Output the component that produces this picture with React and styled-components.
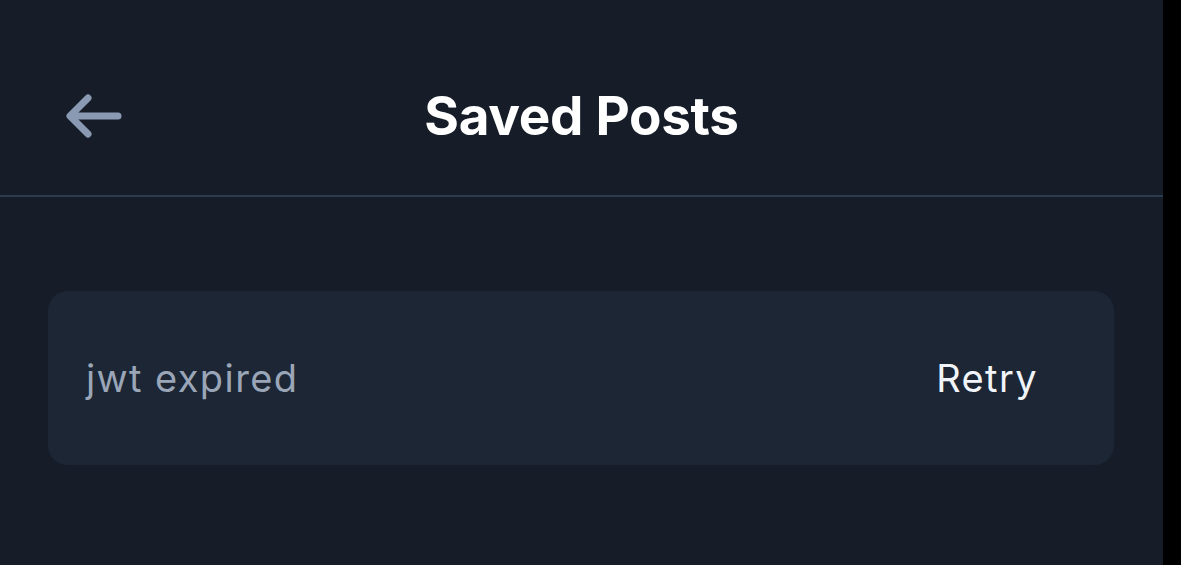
import React from 'react'
import styled, {createGlobalStyle} from 'styled-components'

const GlobalStyle = createGlobalStyle`
  html, body {
    margin: 0;
    padding: 0;
    background: #000;
    font-family: Inter, "Noto Sans", sans-serif;
  }
`;

const Page = styled.div`
  display: flex;
  height: 565px;
  background: #000;
`;

const Screen = styled.div`
  width: 1163px;
  height: 100%;
  background: #161d29;
  display: flex;
  flex-direction: column;
`;

const Header = styled.header`
  height: 197px;
  box-sizing: border-box;
  padding-top: 36px;
  border-bottom: 2px solid #2b3a4c;
  display: grid;
  grid-template-columns: 1fr auto 1fr;
  align-items: center;
`;

const BackButton = styled.button`
  justify-self: start;
  margin-left: 63px;
  padding: 0;
  background: none;
  border: 0;
  width: 70px;
  height: 60px;
  display: flex;
  align-items: center;
  cursor: pointer;
`;

const Title = styled.h1`
  margin: 0;
  color: #ffffff;
  font-size: 53px;
  font-weight: 700;
  letter-spacing: -0.3px;
`;

const Content = styled.main`
  padding: 94px 49px 0 48px;
`;

const ErrorCard = styled.div`
  height: 174px;
  border-radius: 20px;
  background: #1c2635;
  display: flex;
  align-items: center;
  justify-content: space-between;
  padding: 0 76px 0 38px;
  box-sizing: border-box;
`;

const Message = styled.span`
  color: #9aa6b7;
  font-size: 38px;
  letter-spacing: 1.4px;
`;

const RetryButton = styled.button`
  background: none;
  border: 0;
  padding: 0;
  color: #f1f5f9;
  font-family: inherit;
  font-size: 38px;
  letter-spacing: 1.4px;
  cursor: pointer;
`;

function BackArrow() {
    return (
        <svg width="60" height="50" viewBox="0 0 60 50" fill="none">
            <path d="M55 25H8" stroke="#8a9ab3" strokeWidth="7" strokeLinecap="round"/>
            <path d="M25 7L7 25L25 43" stroke="#8a9ab3" strokeWidth="7" strokeLinecap="round" strokeLinejoin="round"/>
        </svg>
    );
}

export default function App() {
    return (
        <Page>
            <GlobalStyle/>
            <Screen>
                <Header>
                    <BackButton aria-label="Back"><BackArrow/></BackButton>
                    <Title>Saved Posts</Title>
                    <span/>
                </Header>
                <Content>
                    <ErrorCard>
                        <Message>jwt expired</Message>
                        <RetryButton>Retry</RetryButton>
                    </ErrorCard>
                </Content>
            </Screen>
        </Page>
    );
}
